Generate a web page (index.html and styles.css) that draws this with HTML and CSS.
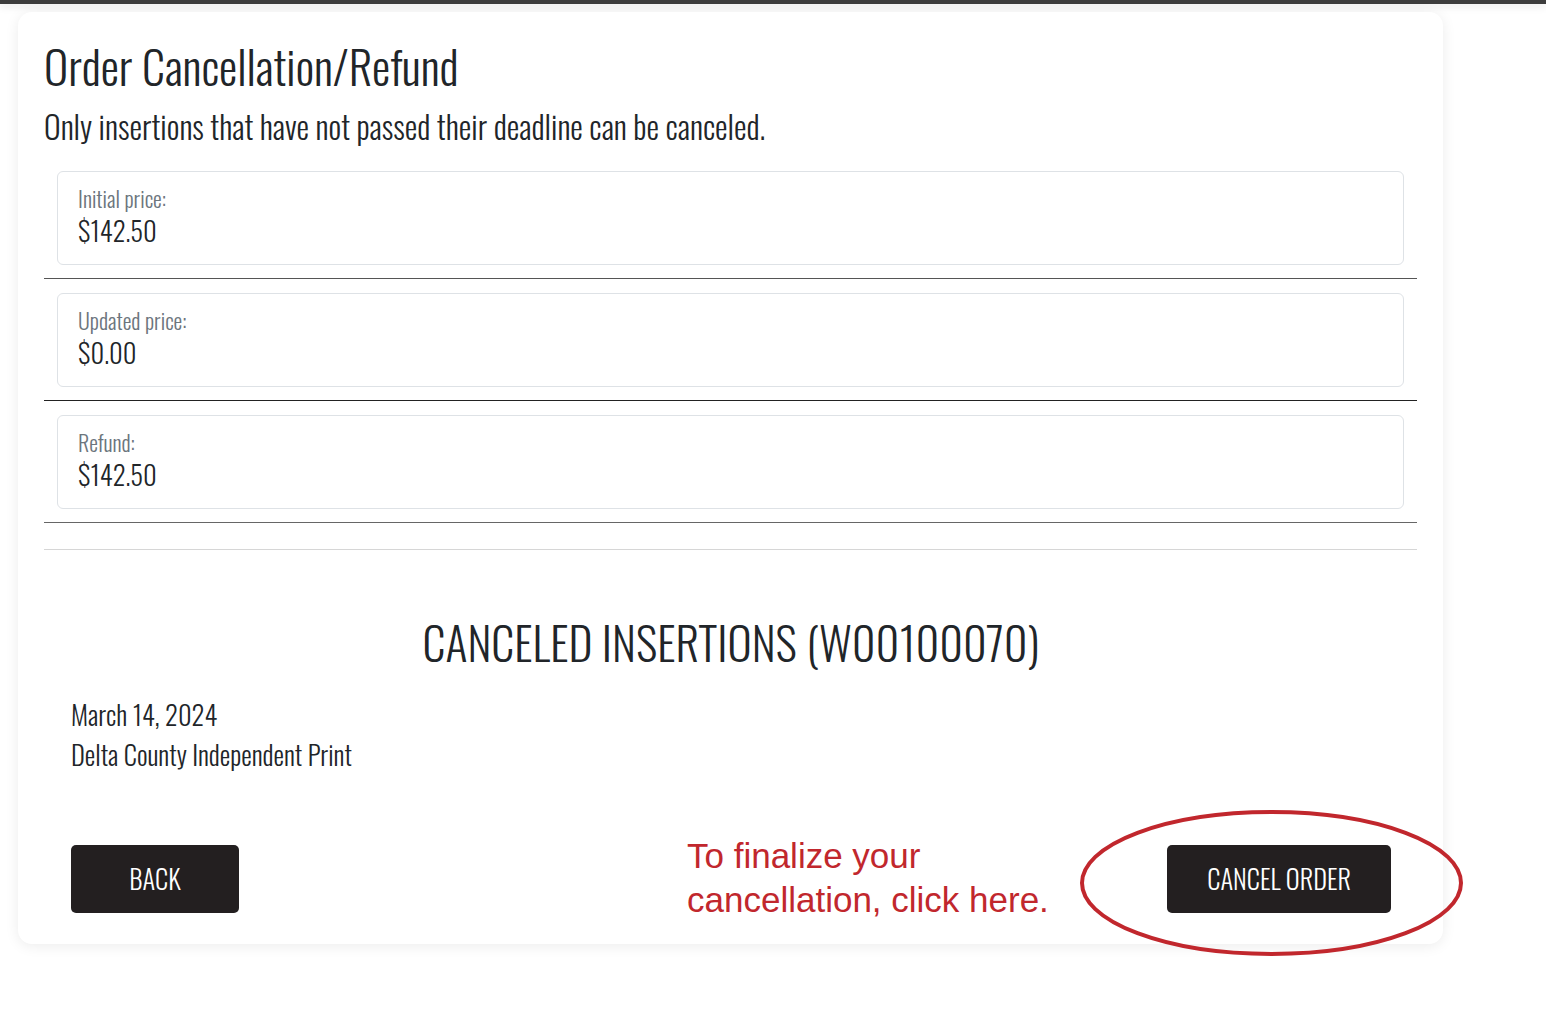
FILE: index.html
```html
<!DOCTYPE html>
<html>
<head>
<meta charset="utf-8">
<link rel="stylesheet" href="styles.css">
</head>
<body>
<div class="topbar"></div>
<div class="page">
  <div class="card">
    <h1 class="title">Order Cancellation/Refund</h1>
    <p class="subtitle">Only insertions that have not passed their deadline can be canceled.</p>
    <div class="row">
      <div class="box"><div class="label">Initial price:</div><div class="value">$142.50</div></div>
    </div>
    <div class="row">
      <div class="box"><div class="label">Updated price:</div><div class="value">$0.00</div></div>
    </div>
    <div class="row">
      <div class="box"><div class="label">Refund:</div><div class="value">$142.50</div></div>
    </div>
    <hr class="sep">
    <div class="insertions">
      <h2 class="ins-title">CANCELED INSERTIONS (W00100070)</h2>
      <div class="ins-line">March 14, 2024</div>
      <div class="ins-line">Delta County Independent Print</div>
      <div class="actions">
        <button class="btn">BACK</button>
        <button class="btn">CANCEL ORDER</button>
      </div>
    </div>
    <p class="note">To finalize your<br>cancellation, click here.</p>
    <svg class="circle" width="394" height="154" viewBox="0 0 394 154"><ellipse cx="193.5" cy="75" rx="189.5" ry="71" fill="none" stroke="#c1272d" stroke-width="4"/></svg>
  </div>
</div>
```
FILE: styles.css
```css
html, body { height: 100%; }
body { margin: 0; font-family: "Oswald", "Liberation Sans", sans-serif; font-weight: 300; color: #212529; background: #fff; }
.topbar { height: 4px; background: #3d3d3d; box-shadow: 0 2px 8px rgba(0,0,0,0.12); }
.page { padding: 8px 103px 88px 18px; }
.card { position: relative; background: #fff; border-radius: 14px; box-shadow: 0 2px 14px rgba(0,0,0,0.08); padding: 25px 26px 31px 26px; }
.title { margin: 0; font-weight: 300; font-size: 46px; line-height: 56px; }
.subtitle { margin: 13px 0 11px; font-size: 31.7px; line-height: 40px; }
.row { padding: 14px 13px 13px; border-bottom: 1px solid #555; }
.row:nth-of-type(2) { border-bottom-color: #222; }
.row:nth-of-type(3) { border-bottom-color: #666; }
.box { box-sizing: border-box; height: 94px; border: 1px solid #dee2e6; border-radius: 6px; padding: 14px 20px 0; }
.label { color: #6c757d; font-size: 22px; line-height: 25px; }
.value { font-size: 26.6px; line-height: 33px; margin-top: 3px; }
.sep { margin: 26px 0 0; border: 0; border-top: 1px solid #d6d6d6; }
.insertions { padding: 0 26px 0 27px; }
.ins-title { margin: 62px 0 23px; text-align: center; font-weight: 300; font-size: 46px; line-height: 58.8px; }
.ins-line { font-size: 26.5px; line-height: 40px; }
.actions { display: flex; justify-content: space-between; margin-top: 71px; }
.btn { font-family: inherit; font-weight: 300; font-size: 26.4px; color: #fff; background: #231f20; border: 0; border-radius: 5px; height: 68px; min-width: 168px; padding: 0 40px; }
.note { position: absolute; left: 669px; top: 822px; margin: 0; font-family: "Liberation Sans", Arial, sans-serif; font-weight: 400; font-size: 35px; line-height: 44px; color: #c1272d; }
.circle { position: absolute; left: 1060px; top: 796px; }
```
